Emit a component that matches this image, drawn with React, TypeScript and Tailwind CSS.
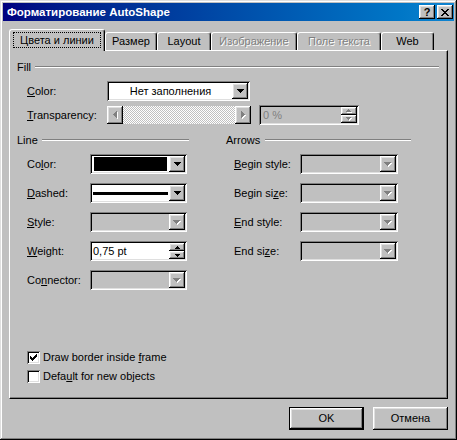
import React from "react";

const raised =
  "shadow-[inset_-1px_-1px_#000,inset_1px_1px_#fff,inset_-2px_-2px_#808080,inset_2px_2px_#dfdfdf]";
const sunken =
  "shadow-[inset_1px_1px_#808080,inset_-1px_-1px_#fff,inset_2px_2px_#000,inset_-2px_-2px_#dfdfdf]";

type Dir = "up" | "down" | "left" | "right";

function Tri({ dir = "down", n = 4, gray = false }: { dir?: Dir; n?: number; gray?: boolean }) {
  const w = 2 * n - 1;
  const horiz = dir === "left" || dir === "right";
  const rects = (dx: number, fill: string) =>
    Array.from({ length: n }, (_, i) => {
      const len = w - 2 * i;
      const step = dir === "down" || dir === "right" ? i : n - 1 - i;
      return horiz ? (
        <rect key={fill + i} x={step + dx} y={i + dx} width={1} height={len} fill={fill} />
      ) : (
        <rect key={fill + i} x={i + dx} y={step + dx} width={len} height={1} fill={fill} />
      );
    });
  const extra = gray ? 1 : 0;
  return (
    <svg
      width={(horiz ? n : w) + extra}
      height={(horiz ? w : n) + extra}
      shapeRendering="crispEdges"
      className="block"
    >
      {gray && rects(1, "#fff")}
      {rects(0, gray ? "#808080" : "#000")}
    </svg>
  );
}

function DropBtn({ gray }: { gray?: boolean }) {
  return (
    <div className={`flex h-[16px] w-[16px] shrink-0 items-center justify-center bg-[#c0c0c0] ${raised}`}>
      <Tri dir="down" n={4} gray={gray} />
    </div>
  );
}

function Spin({ gray }: { gray?: boolean }) {
  return (
    <div className="flex w-[16px] shrink-0 flex-col">
      <div className={`flex flex-1 items-center justify-center bg-[#c0c0c0] ${raised}`}>
        <Tri dir="up" n={3} gray={gray} />
      </div>
      <div className={`flex flex-1 items-center justify-center bg-[#c0c0c0] ${raised}`}>
        <Tri dir="down" n={3} gray={gray} />
      </div>
    </div>
  );
}

function Combo({
  className = "",
  disabled,
  children,
}: {
  className?: string;
  disabled?: boolean;
  children?: React.ReactNode;
}) {
  return (
    <div className={`flex h-[20px] p-[2px] ${sunken} ${disabled ? "bg-[#c0c0c0]" : "bg-white"} ${className}`}>
      <div className="flex min-w-0 flex-1 items-center">{children}</div>
      <DropBtn gray={disabled} />
    </div>
  );
}

function Check({ checked, children }: { checked?: boolean; children: React.ReactNode }) {
  return (
    <div className="flex h-[13px] items-center gap-[3px]">
      <div className={`flex h-[13px] w-[13px] items-center justify-center bg-white ${sunken}`}>
        {checked && (
          <svg width={7} height={7} shapeRendering="crispEdges" className="block">
            {[2, 3, 4, 3, 2, 1, 0].map((y, x) => (
              <rect key={x} x={x} y={y} width={1} height={3} fill="#000" />
            ))}
          </svg>
        )}
      </div>
      <span>{children}</span>
    </div>
  );
}

function Sep({ className = "" }: { className?: string }) {
  return <div className={`h-[2px] flex-1 border-t border-b border-t-[#808080] border-b-white ${className}`} />;
}

const tabBase =
  "flex items-center justify-center rounded-t-[3px] border-t border-l border-r border-t-white border-l-white border-r-black bg-[#c0c0c0] shadow-[inset_-1px_0_#808080]";

export default function App() {
  return (
    <div className="h-[440px] w-[457px] bg-[#c0c0c0] p-[3px] font-['Liberation_Sans',Arial,sans-serif] text-[11px] leading-[13px] text-black shadow-[inset_-1px_-1px_#000,inset_1px_1px_#dfdfdf,inset_-2px_-2px_#808080,inset_2px_2px_#fff]">
      {/* title bar */}
      <div className="flex h-[18px] items-center bg-gradient-to-r from-[#000080] to-[#1084d0] pl-[4px] pr-[1px]">
        <span className="flex-1 text-[11.5px] font-bold text-white">Форматирование AutoShape</span>
        <div className="flex gap-[2px]">
          <div className={`flex h-[14px] w-[16px] items-center justify-center bg-[#c0c0c0] text-[11px] font-bold leading-none ${raised}`}>
            ?
          </div>
          <div className={`flex h-[14px] w-[16px] items-center justify-center bg-[#c0c0c0] ${raised}`}>
            <svg width={8} height={7} shapeRendering="crispEdges" className="block">
              {[
                [0, 6],
                [1, 5],
                [2, 4],
                [3, 3],
                [2, 4],
                [1, 5],
                [0, 6],
              ].map(([a, b], y) => (
                <g key={y}>
                  <rect x={a} y={y} width={2} height={1} fill="#000" />
                  <rect x={b} y={y} width={2} height={1} fill="#000" />
                </g>
              ))}
            </svg>
          </div>
        </div>
      </div>

      {/* tabs */}
      <div className="ml-[6px] mt-[8px] flex h-[21px] items-end">
        <div className={`relative z-10 -mb-px h-[22px] w-[96px] !items-start !justify-start pl-[3px] pt-[2px] ${tabBase}`}>
          <div className="flex h-[16px] w-[88px] items-center justify-center border border-dotted border-black">
            Цвета и линии
          </div>
        </div>
        <div className={`h-[18px] w-[52px] ${tabBase}`}>Размер</div>
        <div className={`h-[18px] w-[54px] ${tabBase}`}>Layout</div>
        <div className={`h-[18px] w-[86px] text-[#808080] [text-shadow:1px_1px_#fff] ${tabBase}`}>Изображение</div>
        <div className={`h-[18px] w-[84px] text-[#808080] [text-shadow:1px_1px_#fff] ${tabBase}`}>Поле текста</div>
        <div className={`h-[18px] w-[53px] ${tabBase}`}>Web</div>
      </div>

      {/* panel */}
      <div className="ml-[6px] flex h-[349px] w-[439px] flex-col border-t border-l border-r border-b border-t-white border-l-white border-r-black border-b-black pb-[15px] shadow-[inset_-1px_-1px_#808080]">
        <div className="mt-[9px] flex h-[14px] items-center pl-[7px] pr-[8px]">
          <span>Fill</span>
          <Sep className="ml-[4px]" />
        </div>
        <div className="mt-[7px] flex h-[20px] items-center pl-[17px]">
          <span className="w-[80px]">
            <u>C</u>olor:
          </span>
          <Combo className="w-[143px]">
            <span className="flex-1 text-center">Нет заполнения</span>
          </Combo>
        </div>
        <div className="mt-[4px] flex h-[20px] items-center pl-[17px]">
          <span className="w-[80px]">
            <u>T</u>ransparency:
          </span>
          <div className="flex h-[18px] w-[144px]">
            <div className={`flex w-[16px] items-center justify-center bg-[#c0c0c0] ${raised}`}>
              <Tri dir="left" n={4} gray />
            </div>
            <div className="flex-1 bg-[image:repeating-conic-gradient(#c0c0c0_0_25%,#fff_0_50%)] bg-[length:2px_2px]" />
            <div className={`flex w-[16px] items-center justify-center bg-[#c0c0c0] ${raised}`}>
              <Tri dir="right" n={4} gray />
            </div>
          </div>
          <div className={`ml-[8px] flex h-[20px] w-[100px] p-[2px] ${sunken}`}>
            <span className="flex flex-1 items-center pl-[2px] text-[#808080]">0 %</span>
            <Spin gray />
          </div>
        </div>

        <div className="mt-[8px] flex">
          {/* Line */}
          <div className="flex w-[179px] flex-col">
            <div className="flex h-[14px] items-center pl-[7px]">
              <span>Line</span>
              <Sep className="ml-[4px]" />
            </div>
            <div className="mt-[7px] flex flex-col gap-[9px] pl-[17px]">
              <div className="flex h-[20px] items-center">
                <span className="w-[63px]">
                  Co<u>l</u>or:
                </span>
                <Combo className="w-[97px]">
                  <div className="mx-[2px] h-[14px] flex-1 bg-black" />
                </Combo>
              </div>
              <div className="flex h-[20px] items-center">
                <span className="w-[63px]">
                  <u>D</u>ashed:
                </span>
                <Combo className="w-[97px]">
                  <div className="mx-[1px] h-[3px] flex-1 bg-black" />
                </Combo>
              </div>
              <div className="flex h-[20px] items-center">
                <span className="w-[63px]">
                  <u>S</u>tyle:
                </span>
                <Combo className="w-[97px]" disabled />
              </div>
              <div className="flex h-[20px] items-center">
                <span className="w-[63px]">
                  <u>W</u>eight:
                </span>
                <div className={`flex h-[20px] w-[97px] bg-white p-[2px] ${sunken}`}>
                  <span className="flex flex-1 items-center pl-[1px]">0,75 pt</span>
                  <Spin />
                </div>
              </div>
              <div className="flex h-[20px] items-center">
                <span className="w-[63px]">
                  Co<u>n</u>nector:
                </span>
                <Combo className="w-[97px]" disabled />
              </div>
            </div>
          </div>

          {/* Arrows */}
          <div className="ml-[37px] flex w-[185px] flex-col">
            <div className="flex h-[14px] items-center">
              <span>Arrows</span>
              <Sep className="ml-[5px]" />
            </div>
            <div className="mt-[7px] flex flex-col gap-[9px] pl-[8px]">
              <div className="flex h-[20px] items-center">
                <span className="w-[66px]">
                  <u>B</u>egin style:
                </span>
                <Combo className="w-[98px]" disabled />
              </div>
              <div className="flex h-[20px] items-center">
                <span className="w-[66px]">
                  Begin si<u>z</u>e:
                </span>
                <Combo className="w-[98px]" disabled />
              </div>
              <div className="flex h-[20px] items-center">
                <span className="w-[66px]">
                  <u>E</u>nd style:
                </span>
                <Combo className="w-[98px]" disabled />
              </div>
              <div className="flex h-[20px] items-center">
                <span className="w-[66px]">
                  End si<u>z</u>e:
                </span>
                <Combo className="w-[98px]" disabled />
              </div>
            </div>
          </div>
        </div>

        <div className="mt-auto flex flex-col gap-[6px] pl-[17px]">
          <Check checked>
            Draw border inside <u>f</u>rame
          </Check>
          <Check>
            Defa<u>u</u>lt for new objects
          </Check>
        </div>
      </div>

      {/* buttons */}
      <div className="mt-[8px] flex justify-end gap-[9px] pr-[6px]">
        <button className={`h-[23px] w-[75px] border border-black bg-[#c0c0c0] ${raised}`}>OK</button>
        <button className={`h-[23px] w-[75px] bg-[#c0c0c0] ${raised}`}>Отмена</button>
      </div>
    </div>
  );
}
